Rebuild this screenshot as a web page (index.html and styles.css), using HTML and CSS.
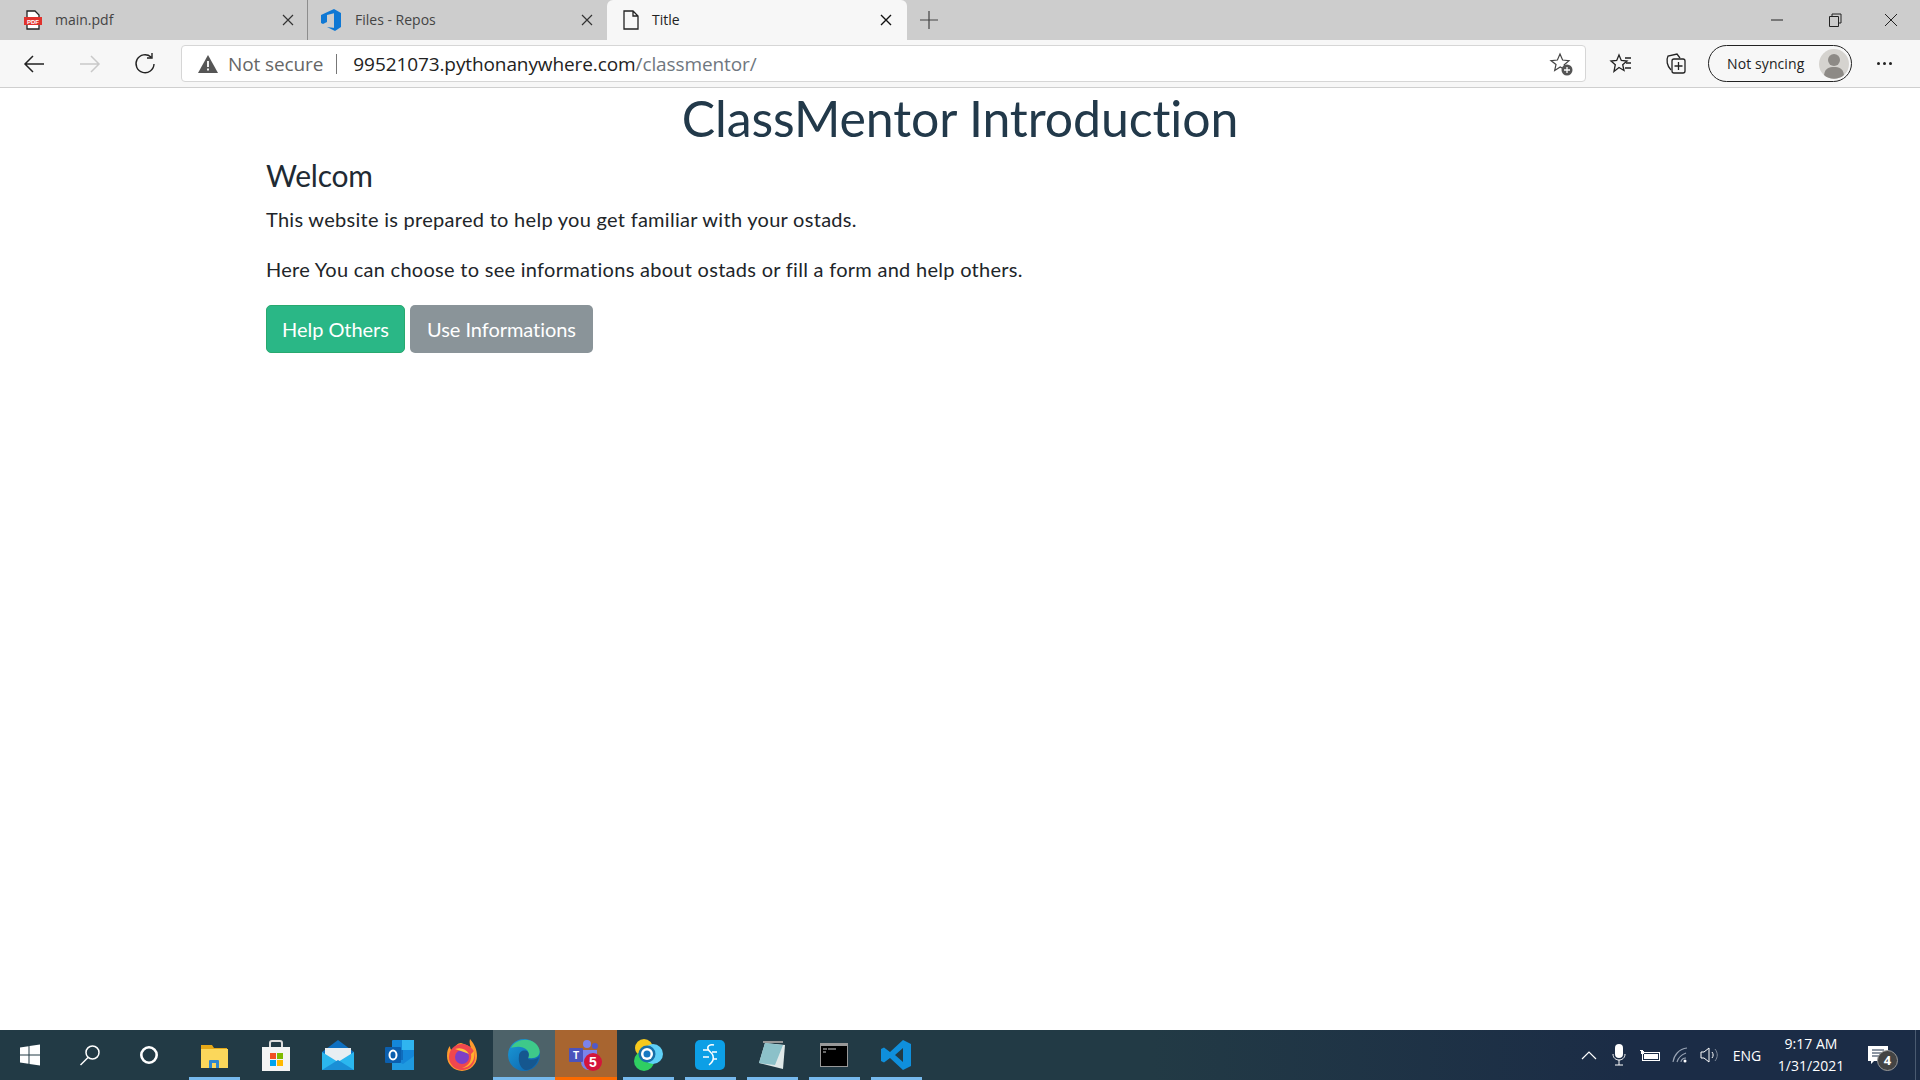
FILE: index.html
```html
<!DOCTYPE html>
<html lang="en">
<head>
<meta charset="utf-8">
<title>Title</title>
<link rel="stylesheet" href="styles.css">
</head>
<body>
<div class="window">
  <header class="tabstrip">
    <div class="tab tab-one">
      <svg class="tab-icon" width="20" height="20" viewBox="0 0 20 20"><path d="M4 1h8l4 4v14H4z" fill="#fff" stroke="#222" stroke-width="1.3"/><rect x="1" y="7" width="18" height="8" fill="#e0322d"/><text class="pdf-mark" x="10" y="13.500" text-anchor="middle">PDF</text></svg>
      <span class="tab-label">main.pdf</span>
      <svg class="tab-close" width="12" height="12" viewBox="0 0 12 12"><path d="M1 1l10 10M11 1L1 11" stroke="#333" stroke-width="1.2"/></svg>
    </div>
    <div class="tab tab-two">
      <svg class="tab-icon" width="22" height="22" viewBox="0 0 22 22"><path d="M13 0l7 4v14l-6 4-8-4 8 1V4L6 6v7l-4 2-2-1V6z" fill="#0f78d4"/><path d="M14 1v20" stroke="#0f78d4" stroke-width="2"/></svg>
      <span class="tab-label">Files - Repos</span>
      <svg class="tab-close" width="12" height="12" viewBox="0 0 12 12"><path d="M1 1l10 10M11 1L1 11" stroke="#333" stroke-width="1.2"/></svg>
    </div>
    <div class="tab tab-active">
      <svg class="tab-icon" width="18" height="20" viewBox="0 0 18 20"><path d="M2 1h9l5 5v13H2zM11 1v5h5" fill="none" stroke="#222" stroke-width="1.3"/></svg>
      <span class="tab-label">Title</span>
      <svg class="tab-close" width="12" height="12" viewBox="0 0 12 12"><path d="M1 1l10 10M11 1L1 11" stroke="#111" stroke-width="1.4"/></svg>
    </div>
    <svg class="new-tab" width="18" height="18" viewBox="0 0 18 18"><path d="M9 0v18M0 9h18" stroke="#444" stroke-width="1.2"/></svg>
    <div class="win-controls">
      <svg width="14" height="14" viewBox="0 0 14 14"><path d="M1 7h12" stroke="#222"/></svg>
      <svg width="14" height="14" viewBox="0 0 14 14"><path d="M1.5 3.500h9v10h-9zM4 3.500V1h9v9h-2.500" fill="none" stroke="#222"/></svg>
      <svg width="14" height="14" viewBox="0 0 14 14"><path d="M1 1l12 12M13 1L1 13" stroke="#222"/></svg>
    </div>
  </header>

  <nav class="toolbar">
    <svg class="nav-btn" width="24" height="20" viewBox="0 0 24 20"><path d="M22 10H3M11 2l-8 8 8 8" fill="none" stroke="#222" stroke-width="1.5"/></svg>
    <svg class="nav-btn" width="24" height="20" viewBox="0 0 24 20"><path d="M2 10h19M13 2l8 8-8 8" fill="none" stroke="#c9c9c9" stroke-width="1.5"/></svg>
    <svg class="nav-btn" width="24" height="22" viewBox="0 0 24 22"><path d="M18 4a9 9 0 1 0 3 7M19 0v5h-5" fill="none" stroke="#222" stroke-width="1.4"/></svg>
    <div class="address">
      <svg width="20" height="18" viewBox="0 0 20 18"><path d="M10 0l10 18H0z" fill="#555"/><path d="M10 6v6M10 13.500v2" stroke="#fff" stroke-width="1.8"/></svg>
      <span class="not-secure">Not secure</span>
      <span class="addr-sep"></span>
      <span class="url">99521073.pythonanywhere.com<span class="url-path">/classmentor/</span></span>
      <svg class="addr-star" width="24" height="24" viewBox="0 0 24 24"><path d="M11 2l2.600 6 6.400.6-4.800 4.200 1 5-5-2.800-5.500 3.400 1.300-6L2 8.600 8.400 8z" fill="none" stroke="#444" stroke-width="1.200"/><circle cx="18" cy="18" r="5.500" fill="#555"/><path d="M18 15v6M15 18h6" stroke="#fff" stroke-width="1.300"/></svg>
    </div>
    <svg class="tool-btn" width="24" height="24" viewBox="0 0 24 24"><path d="M10 3l2.300 5.500 5.700.5-4.300 3.700 1.300 5.800-5-3-5 4 1.300-6.800L2 9l5.700-.5z" fill="none" stroke="#222" stroke-width="1.300"/><path d="M16 6h6M17 11h5M16 16h6" stroke="#222" stroke-width="1.500"/></svg>
    <svg class="tool-btn" width="24" height="24" viewBox="0 0 24 24"><path d="M7 18C3 14 2 8 4 4l9-2 3 4" fill="none" stroke="#222" stroke-width="1.300"/><rect x="8" y="7" width="13" height="14" rx="2" fill="#f7f7f7" stroke="#222" stroke-width="1.300"/><path d="M14.500 10v8M10.500 14h8" stroke="#222" stroke-width="1.300"/></svg>
    <div class="sync-pill">
      <span class="sync-label">Not syncing</span>
      <span class="avatar"><svg width="30" height="30" viewBox="0 0 30 30"><circle cx="15" cy="15" r="15" fill="#d5d3cf"/><circle cx="15" cy="11" r="6" fill="#8d8a86"/><path d="M5 26c1-7 5-8 10-8s9 1 10 8a15 15 0 0 1-20 0z" fill="#8d8a86"/></svg></span>
    </div>
    <span class="more"><i></i><i></i><i></i></span>
  </nav>

  <main class="page">
    <h1 class="page-title">ClassMentor Introduction</h1>
    <section class="intro">
      <h2 class="intro-title">Welcom</h2>
      <p class="intro-text">This website is prepared to help you get familiar with your ostads.</p>
      <p class="intro-text">Here You can choose to see informations about ostads or fill a form and help others.</p>
      <div class="actions">
        <a class="btn btn-green">Help Others</a>
        <a class="btn btn-gray">Use Informations</a>
      </div>
    </section>
  </main>

  <footer class="taskbar">
    <div class="task-left">
      <svg class="sys-icon" width="22" height="22" viewBox="0 0 22 22"><path d="M1 3.500l8.500-1.200V10.500H1zM10.500 2.100L21 .6v9.900H10.500zM1 11.500h8.500v8.200L1 18.500zM10.500 11.500H21v9.900l-10.500-1.500z" fill="#fff"/></svg>
      <svg class="sys-icon" width="22" height="22" viewBox="0 0 22 22"><circle cx="13.500" cy="8.500" r="6.500" fill="none" stroke="#fff" stroke-width="1.500"/><path d="M9 13.500L1.500 21" stroke="#fff" stroke-width="1.500"/></svg>
      <svg class="sys-icon" width="20" height="20" viewBox="0 0 20 20"><circle cx="10" cy="10" r="7.700" fill="none" stroke="#fff" stroke-width="2.600"/></svg>
      <span class="task-item is-open"><svg width="28" height="26" viewBox="0 0 28 26"><path d="M1 3h11l2 3h13v20H1z" fill="#e6a817"/><rect x="1" y="7" width="27" height="19" fill="#fbd75b"/><path d="M9 26v-7a1 1 0 0 1 1-1h8a1 1 0 0 1 1 1v7h-3v-5h-4v5z" fill="#2d87d0"/></svg></span>
      <span class="task-item"><svg width="30" height="32" viewBox="0 0 30 32"><path d="M9 9V4a2 2 0 0 1 2-2h8a2 2 0 0 1 2 2v5" fill="none" stroke="#ddd" stroke-width="2"/><rect x="1" y="8" width="28" height="24" fill="#f4f4f4"/><rect x="9" y="14" width="6" height="6" fill="#f25022"/><rect x="16" y="14" width="6" height="6" fill="#7fba00"/><rect x="9" y="21" width="6" height="6" fill="#00a4ef"/><rect x="16" y="21" width="6" height="6" fill="#ffb900"/></svg></span>
      <span class="task-item"><svg width="32" height="30" viewBox="0 0 32 30"><path d="M16 0l16 12v18H0V12z" fill="#0e6fc0"/><path d="M3 8h26v8l-13 8-13-8z" fill="#e8eef2"/><path d="M0 12l16 10 16-10v18H0z" fill="#2bb7ef"/><path d="M0 30l16-10 16 10z" fill="#1a8fd6"/></svg></span>
      <span class="task-item"><svg width="30" height="32" viewBox="0 0 30 32"><rect x="7" y="1" width="22" height="30" rx="1" fill="#1487d9"/><rect x="17" y="1" width="12" height="10" fill="#30b5f0"/><rect x="7" y="11" width="11" height="10" fill="#0f6cbd"/><path d="M7 20l11 5 11-8v14H7z" fill="#1f9ae0"/><rect x="0" y="8" width="16" height="16" rx="1" fill="#0b5fae"/><ellipse cx="8" cy="16" rx="3.500" ry="4.500" fill="none" stroke="#fff" stroke-width="2"/></svg></span>
      <span class="task-item"><svg width="30" height="32" viewBox="0 0 30 32"><path d="M23 0c5 6 7 11 7 17a15 15 0 0 1-30 0c0-5 1-8 3-10 0 3 1 4 3 5 1-5 5-8 8-8 4 1 8 3 10 5-1-3-2-6-1-9z" fill="#ff9a2e"/><circle cx="15" cy="18" r="13" fill="#f0474e"/><path d="M27 12c2 8-3 17-12 17 7-2 10-8 9-14z" fill="#ffb02e"/><circle cx="15" cy="18" r="7" fill="#7d3fc7"/><path d="M8 10c6-2 11 0 14 5-4-2-9-3-14-5z" fill="#ffc53d"/></svg></span>
      <span class="task-item is-active"><svg width="32" height="32" viewBox="0 0 32 32"><defs><linearGradient id="edge" x1="0" y1="0" x2="1" y2="1"><stop offset="0" stop-color="#1a9bd8"/><stop offset="1" stop-color="#0c5ea8"/></linearGradient></defs><circle cx="16" cy="16" r="16" fill="url(#edge)"/><path d="M3 9C7 1 19-2 27 4c5 4 6 10 3 13-3 3-8 2-11 2 2-2 2-6 0-8C14 6 6 8 3 9z" fill="#3ec98a"/><path d="M11 17c0-5 6-7 9-4 2 3 0 6 0 7 3 1 8 1 11-2-2 8-9 14-14 13-5-2-7-9-6-14z" fill="#15578f"/></svg></span>
      <span class="task-item is-alert"><svg width="34" height="32" viewBox="0 0 34 32"><circle cx="18" cy="5" r="4" fill="#7b83eb"/><circle cx="26" cy="7" r="3" fill="#5059c9"/><path d="M10 11h18v12a8 8 0 0 1-16 0z" fill="#7b83eb"/><rect x="0" y="9" width="14" height="14" rx="1" fill="#4b53bc"/><text class="teams-t" x="7" y="20" text-anchor="middle">T</text><circle cx="24" cy="23" r="9" fill="#d3153b"/><text class="teams-n" x="24" y="28" text-anchor="middle">5</text></svg></span>
      <span class="task-item is-open"><svg width="30" height="32" viewBox="0 0 30 32"><circle cx="11" cy="9" r="9" fill="#f6c91d"/><circle cx="11" cy="22" r="10" fill="#2fcf62"/><circle cx="20" cy="15" r="10" fill="#5fd0f7"/><circle cx="14" cy="15" r="8.500" fill="#176fa8"/><circle cx="14" cy="15" r="6" fill="#fff"/><circle cx="14" cy="15" r="3.500" fill="#1678c2"/></svg></span>
      <span class="task-item is-open"><svg width="30" height="30" viewBox="0 0 30 30"><rect width="30" height="30" rx="5" fill="#0c9fe6"/><path d="M19 5c-4-1-7 1-6 4 1 3 5 4 5 7 1 3 0 6-4 9" fill="none" stroke="#fff" stroke-width="1.500"/><path d="M8 10h5M17 12h5M8 17h6M18 19h4" stroke="#fff" stroke-width="1.300"/></svg></span>
      <span class="task-item is-open"><svg width="28" height="28" viewBox="0 0 28 28"><path d="M7 2l20 2-2 24L1 22z" fill="#dfe8e8"/><path d="M7 2l18 2-8 20L1 22z" fill="#8cc1c9"/><path d="M5 1h20" stroke="#999" stroke-width="2"/></svg></span>
      <span class="task-item is-open"><svg width="28" height="24" viewBox="0 0 28 24"><rect width="28" height="24" fill="#999"/><rect x="1" y="3" width="26" height="20" fill="#000"/><path d="M3 6h4M8 6h8M3 9h3" stroke="#ccc"/></svg></span>
      <span class="task-item is-open"><svg width="30" height="30" viewBox="0 0 30 30"><path d="M22 0l8 4v22l-8 4-13-12-6 4.500L0 21v-12l3-1.500 6 4.500zM22 8l-8 7 8 7z" fill="#0f8fdc"/></svg></span>
    </div>
    <div class="tray">
      <svg class="tray-chevron" width="16" height="10" viewBox="0 0 16 10"><path d="M1 9l7-7 7 7" fill="none" stroke="#fff" stroke-width="1.200"/></svg>
      <svg class="tray-mic" width="14" height="22" viewBox="0 0 14 22"><rect x="3" y="0" width="8" height="14" rx="4" fill="#fff"/><path d="M1 10c0 8 12 8 12 0M7 16v5M3 21h8" fill="none" stroke="#fff"/></svg>
      <svg class="tray-batt" width="20" height="12" viewBox="0 0 20 12"><path d="M0 1h3v1h1v3H1V2H0z" fill="#fff"/><rect x="2.500" y="3.500" width="17" height="8" fill="none" stroke="#fff"/><rect x="4" y="5" width="14" height="5" fill="#fff"/></svg>
      <svg class="tray-wifi" width="16" height="16" viewBox="0 0 16 16"><path d="M1 15C2 8 7 2 15 1M5 15c1-4 4-7 9-9M9 15c0-2 2-4 5-4" fill="none" stroke="#9aa5b5" stroke-width="1.100"/><circle cx="13" cy="14" r="1.500" fill="#fff"/></svg>
      <svg class="tray-vol" width="20" height="16" viewBox="0 0 20 16"><path d="M1 5h3l5-4v14l-5-4H1z" fill="none" stroke="#fff"/><path d="M12 5c1.500 2 1.500 4 0 6" fill="none" stroke="#fff"/><path d="M15 2c3 4 3 8 0 12" fill="none" stroke="#7d8899"/></svg>
      <span class="tray-lang">ENG</span>
      <span class="tray-clock"><span>9:17 AM</span><span>1/31/2021</span></span>
      <span class="tray-notif">
        <svg width="22" height="18" viewBox="0 0 22 18"><path d="M0 0h20v15H6l-3 3v-3H0z" fill="#fff"/><path d="M4 4h12M4 7h12M4 10h8" stroke="#1b2c46"/></svg>
        <span class="notif-badge">4</span>
      </span>
      <span class="show-desktop"></span>
    </div>
  </footer>
</div>
</body>
</html>
```

FILE: styles.css
```css
* { box-sizing: border-box; }
html, body { margin: 0; height: 100%; }
body { background: #fff; overflow: hidden; }
.window { display: flex; flex-direction: column; width: 1920px; height: 1080px; }

/* tab strip */
.tabstrip { display: flex; align-items: stretch; height: 40px; background: #cdcdcd; font-family: "Open Sans", sans-serif; font-size: 14px; color: #444; }
.tab { display: flex; align-items: center; position: relative; height: 40px; }
.tab-one { width: 308px; padding: 0 13px 0 23px; border-right: 1px solid #8d8d8d; }
.tab-two { width: 299px; padding: 0 14px 0 13px; }
.tab-active { width: 300px; padding: 0 15px; background: #f7f7f7; border-radius: 6px 6px 0 0; color: #222; }
.tab-icon { flex: none; margin-right: 12px; }
.tab-label { flex: 1; padding-bottom: 2px; }
.tab-close { flex: none; }
.new-tab { align-self: center; margin-left: 13px; }
.win-controls { margin-left: auto; display: flex; align-items: center; gap: 42px; padding-right: 22px; }
.win-controls svg:first-child { margin-right: 2px; }
.pdf-mark { font: 700 6px "Liberation Sans", sans-serif; fill: #fff; }

/* toolbar */
.toolbar { display: flex; align-items: center; height: 48px; background: #f7f7f7; border-bottom: 1px solid #cfcfcf; padding-left: 22px; }
.nav-btn { flex: none; margin-right: 31px; }
.nav-btn:first-child { margin-right: 32px; }
.nav-btn:nth-child(3) { margin-right: 24px; }
.address { display: flex; align-items: center; width: 1405px; height: 37px; background: #fff; border: 1px solid #d6d6d6; border-radius: 4px; padding: 0 12px 0 16px; font-family: "Open Sans", sans-serif; font-size: 19px; }
.not-secure { color: #666; margin-left: 10px; letter-spacing: -.1px; }
.addr-sep { width: 1px; height: 20px; background: #777; margin: 0 16px 0 13px; }
.url { color: #222; letter-spacing: -.1px; flex: 1; }
.url-path { color: #6f7780; }
.addr-star { flex: none; }
.tool-btn { flex: none; margin-left: 23px; }
.tool-btn + .tool-btn { margin-left: 31px; }
.sync-pill { display: flex; align-items: center; justify-content: space-between; width: 144px; height: 37px; margin-left: 20px; border: 1.500px solid #222; border-radius: 19px; padding: 0 2px 0 18px; font-family: "Open Sans", sans-serif; font-size: 14px; color: #222; letter-spacing: .1px; }
.avatar { display: flex; }
.more { display: flex; gap: 3px; margin-left: 25px; }
.more i { width: 3px; height: 3px; border-radius: 50%; background: #222; }

/* page */
.page { flex: 1; padding-left: 266px; font-family: "Lato", sans-serif; font-variant-ligatures: none; }
.page-title { margin: 0 266px 0 0; height: 62px; line-height: 61px; text-align: center; font-size: 50px; font-weight: 400; color: #22394a; letter-spacing: -.1px; }
.intro-title { margin: 6px 0 10px; font-size: 30px; line-height: 38px; font-weight: 400; color: #212a33; letter-spacing: -.2px; }
.intro-text { margin: 0 0 20px; font-size: 20px; line-height: 30px; color: #212529; letter-spacing: .28px; }
.actions { display: flex; gap: 5px; padding-top: 1px; }
.btn { display: flex; align-items: center; justify-content: center; height: 48px; font-size: 20px; color: #fff; border-radius: 5px; letter-spacing: -.05px; }
.btn-green { width: 139px; background: #2ab786; border: 1px solid #28a96f; }
.btn-gray { width: 183px; background: #8a9499; }

/* taskbar */
.taskbar { display: flex; justify-content: space-between; height: 50px; background: linear-gradient(90deg, #223a45 0%, #223a45 60%, #1b2c46 85%, #1b2c46 100%); }
.task-left { display: flex; align-items: center; }
.sys-icon { flex: none; }
.sys-icon:nth-child(1) { margin-left: 19px; }
.sys-icon:nth-child(2) { margin-left: 38px; }
.sys-icon:nth-child(3) { margin-left: 38px; margin-right: 24px; }
.task-item { display: flex; align-items: center; justify-content: center; width: 62px; height: 50px; }
.is-open { background: linear-gradient(#76b9ed, #76b9ed) center bottom / 51px 3px no-repeat; }
.is-active { background: #4d6269; box-shadow: inset 0 -3px 0 #76b9ed; }
.is-alert { background: #a86530; box-shadow: inset 0 -3px 0 #fb6a00; }
.teams-t { font: 700 10px "Liberation Sans", sans-serif; fill: #fff; }
.teams-n { font: 700 14px "Liberation Sans", sans-serif; fill: #fff; }
.tray { display: flex; align-items: center; color: #fff; font-family: "Open Sans", sans-serif; font-size: 14px; }
.tray-mic { margin-left: 15px; }
.tray-batt { margin-left: 14px; }
.tray-wifi { margin-left: 12px; }
.tray-vol { margin-left: 12px; }
.tray-lang { margin-left: 13px; letter-spacing: -.1px; }
.tray-clock { display: flex; flex-direction: column; align-items: center; width: 70px; margin-left: 15px; line-height: 22px; }
.tray-notif { position: relative; display: flex; margin-left: 22px; margin-right: 25px; }
.notif-badge { position: absolute; left: 9px; top: 4px; width: 21px; height: 21px; border-radius: 50%; background: #444; border: 1px solid #999; color: #fff; font-size: 13px; line-height: 19px; text-align: center; font-weight: 700; }
.show-desktop { width: 5px; height: 50px; border-left: 1px solid #4a5a70; }
```
